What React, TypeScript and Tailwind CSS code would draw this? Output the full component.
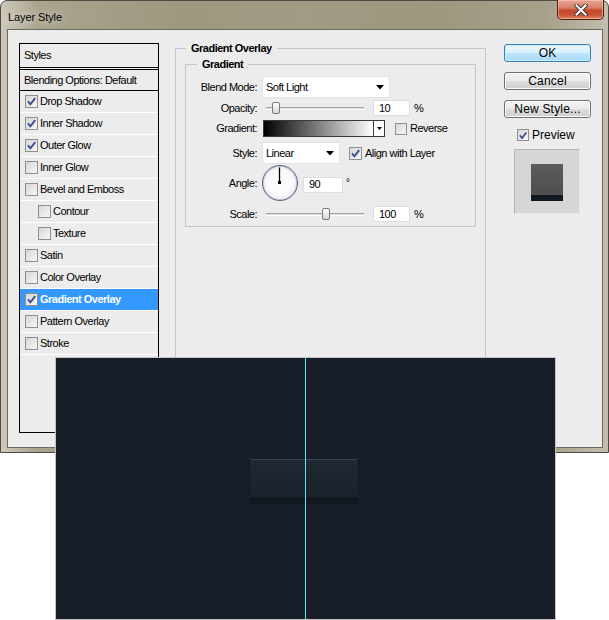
import React from "react";

function Check({ checked, size = 13 }: { checked?: boolean; size?: number }) {
  return (
    <span
      className="border border-[#8e8f8f] bg-[linear-gradient(135deg,#d6d6d6,#f7f7f7)] flex items-center justify-center shrink-0"
      style={{ width: size, height: size }}
    >
      {checked && (
        <svg width="11" height="11" viewBox="0 0 11 11">
          <path d="M2 5.3 L4.4 8.3 L9.2 2.2" fill="none" stroke="#3a4c8c" strokeWidth="1.9" />
        </svg>
      )}
    </span>
  );
}

const items: { label: string; checked?: boolean; indent?: boolean; selected?: boolean }[] = [
  { label: "Drop Shadow", checked: true },
  { label: "Inner Shadow", checked: true },
  { label: "Outer Glow", checked: true },
  { label: "Inner Glow" },
  { label: "Bevel and Emboss" },
  { label: "Contour", indent: true },
  { label: "Texture", indent: true },
  { label: "Satin" },
  { label: "Color Overlay" },
  { label: "Gradient Overlay", checked: true, selected: true },
  { label: "Pattern Overlay" },
  { label: "Stroke" },
];

function Arrow() {
  return (
    <svg width="8" height="5" viewBox="0 0 8 5">
      <path d="M0 0 H8 L4 4.5 Z" fill="#000" />
    </svg>
  );
}

function Slider({ pos }: { pos: number }) {
  return (
    <div className="w-[111px] h-full flex items-center pl-[4px]">
      <div className="relative w-[98px] h-[3px] border-t border-[#a7a7a7] border-b border-b-white bg-[#dcdcdc]">
        <div
          className="absolute top-[-6px] w-[8px] h-[12px] rounded-[2px] border border-[#7a7a7a] bg-[linear-gradient(#fdfdfd,#d9d9d9)]"
          style={{ left: pos }}
        />
      </div>
    </div>
  );
}

function NumBox({ value, w = 37 }: { value: string; w?: number }) {
  return (
    <div
      className="h-[16px] bg-white border border-[#dedede] flex items-center pl-[5px] text-[11px]"
      style={{ width: w }}
    >
      {value}
    </div>
  );
}

function Btn({ children, primary }: { children: React.ReactNode; primary?: boolean }) {
  return (
    <div
      className={
        "w-[87px] h-[18px] rounded-[3px] border flex items-center justify-center text-[12px] tracking-[0.2px] text-black " +
        (primary
          ? "border-[#3c7fb1] bg-[linear-gradient(#eaf6fd_0%,#d9f0fc_50%,#bee6fd_51%,#a7d9f5_100%)] shadow-[inset_0_0_0_1px_#c9eefe]"
          : "border-[#707070] bg-[linear-gradient(#f2f2f2_0%,#ebebeb_50%,#dddddd_51%,#cfcfcf_100%)] shadow-[inset_0_0_0_1px_#fcfcfc]")
      }
    >
      {children}
    </div>
  );
}

export default function App() {
  return (
    <div className="relative w-[609px] h-[620px] bg-white overflow-hidden font-['Liberation_Sans',Arial,sans-serif] text-black">
      {/* window */}
      <div className="w-[609px] h-[453px] rounded-t-[7px] border border-[#4e4b43] bg-[linear-gradient(90deg,#cfc9ba_0%,#aaa38e_6%,#9e987f_30%,#a29b84_50%,#9d977e_70%,#a7a08a_90%,#c3bdad_100%)] flex flex-col">
        <div className="h-[28px] flex items-start justify-between">
          <div className="ml-[7px] mt-[8px] text-[11px] tracking-[-0.1px] text-black [text-shadow:0_0_8px_rgba(255,255,255,0.9)]">
            Layer Style
          </div>
          <div className="mr-[4px] mt-[-1px] w-[47px] h-[20px] rounded-b-[5px] border border-[#4a1e15] border-t-0 bg-[linear-gradient(#e8a894_0%,#d9806a_40%,#c5482c_55%,#c95535_80%,#dd8a60_100%)] shadow-[inset_0_0_0_1px_rgba(255,210,190,0.5)] flex items-center justify-center">
            <svg width="14" height="12" viewBox="0 0 14 12">
              <path d="M2.5 1.5 L11.5 10.5 M11.5 1.5 L2.5 10.5" stroke="#3a2a28" strokeWidth="4" strokeLinecap="square" />
              <path d="M2.5 1.5 L11.5 10.5 M11.5 1.5 L2.5 10.5" stroke="#ffffff" strokeWidth="2.2" strokeLinecap="square" />
            </svg>
          </div>
        </div>

        {/* client */}
        <div className="ml-[6px] mr-[5px] h-[419px] border border-[#6f6a5e] bg-[#ececec] flex items-start pl-[11px] pt-[13px] text-[11px] tracking-[-0.5px]">
          {/* sidebar */}
          <div className="w-[140px] h-[390px] border border-black flex flex-col shrink-0">
            <div className="h-[23px] flex items-center pl-[4px]">Styles</div>
            <div className="h-[3px] border-y border-black" />
            <div className="h-[20px] flex items-center pl-[4px]">Blending Options: Default</div>
            <div className="h-px bg-black" />
            {items.map((it) => (
              <div
                key={it.label}
                className={
                  "h-[22px] border-b border-white flex items-center gap-[1px] " +
                  (it.indent ? "pl-[18px] " : "pl-[5px] ") +
                  (it.selected ? "bg-[#3399ff] text-white font-bold" : "")
                }
              >
                <Check checked={it.checked} />
                <span className="ml-[1px]">{it.label}</span>
              </div>
            ))}
          </div>

          {/* main group */}
          <fieldset className="ml-[16px] mt-[-1px] w-[311px] h-[380px] border border-[#c6c6c6] shrink-0">
            <legend className="ml-[10px] px-[5px] font-bold leading-[12px]">Gradient Overlay</legend>
            <fieldset className="ml-[9px] mr-[9px] mt-[4px] border border-[#c6c6c6] pb-[4px]">
              <legend className="ml-[11px] px-[5px] font-bold leading-[12px]">Gradient</legend>
              <div className="flex flex-col mt-[6px]">
                {/* Blend mode */}
                <div className="h-[22px] flex items-center">
                  <div className="w-[71px] text-right">Blend Mode:</div>
                  <div className="ml-[5px] w-[128px] h-[22px] bg-white border border-[#e2e2e2] flex items-center justify-between pl-[3px] pr-[5px]">
                    <span>Soft Light</span>
                    <Arrow />
                  </div>
                </div>
                {/* Opacity */}
                <div className="mt-[2px] h-[16px] flex items-center">
                  <div className="w-[71px] text-right">Opacity:</div>
                  <div className="ml-[5px] h-full flex items-center">
                    <Slider pos={6} />
                    <NumBox value="10" />
                    <span className="ml-[4px]">%</span>
                  </div>
                </div>
                {/* Gradient */}
                <div className="mt-[4px] h-[17px] flex items-center">
                  <div className="w-[71px] text-right">Gradient:</div>
                  <div className="ml-[6px] w-[122px] h-[17px] border border-[#3a3a3a] flex">
                    <div className="flex-1 bg-[linear-gradient(90deg,#000,#fff)] border-r border-[#3a3a3a]" />
                    <div className="w-[10px] bg-white flex items-center justify-center">
                      <svg width="5" height="3" viewBox="0 0 5 3">
                        <path d="M0 0 H5 L2.5 3 Z" fill="#000" />
                      </svg>
                    </div>
                  </div>
                  <div className="ml-[10px] flex items-center gap-[2px]">
                    <Check size={12} />
                    <span className="ml-[1px]">Reverse</span>
                  </div>
                </div>
                {/* Style */}
                <div className="mt-[5px] h-[22px] flex items-center">
                  <div className="w-[71px] text-right">Style:</div>
                  <div className="ml-[5px] w-[78px] h-[22px] bg-white border border-[#e2e2e2] flex items-center justify-between pl-[3px] pr-[5px]">
                    <span>Linear</span>
                    <Arrow />
                  </div>
                  <div className="ml-[9px] flex items-center gap-[3px]">
                    <Check checked />
                    <span>Align with Layer</span>
                  </div>
                </div>
                {/* Angle */}
                <div className="mt-[1px] h-[36px] flex items-center">
                  <div className="w-[71px] text-right">Angle:</div>
                  <div className="ml-[5px] w-[36px] h-[36px] rounded-full border-[1.5px] border-[#56617a] bg-[radial-gradient(circle,#fbfbfb_45%,#e3e5ea_100%)] shadow-[inset_0_0_0_1px_#c9cdd6] relative">
                    <svg className="absolute inset-0" width="33" height="33" viewBox="0 0 33 33">
                      <line x1="16.5" y1="16.5" x2="16.5" y2="1.5" stroke="#000" strokeWidth="1.3" />
                      <rect x="15" y="15" width="3" height="3" fill="#000" />
                    </svg>
                  </div>
                  <div className="ml-[5px] mt-[3px]">
                    <NumBox value="90" w={40} />
                  </div>
                  <span className="ml-[3px] self-start mt-[10px] text-[10px]">°</span>
                </div>
                {/* Scale */}
                <div className="mt-[5px] h-[16px] flex items-center">
                  <div className="w-[71px] text-right">Scale:</div>
                  <div className="ml-[5px] h-full flex items-center">
                    <Slider pos={56} />
                    <NumBox value="100" />
                    <span className="ml-[4px]">%</span>
                  </div>
                </div>
              </div>
            </fieldset>
          </fieldset>

          {/* buttons */}
          <div className="ml-[18px] mt-[1px] flex flex-col tracking-normal">
            <Btn primary>OK</Btn>
            <div className="mt-[10px]">
              <Btn>Cancel</Btn>
            </div>
            <div className="mt-[10px]">
              <Btn>New Style...</Btn>
            </div>
            <div className="mt-[8px] ml-[13px] flex items-center gap-[3px] text-[12px]">
              <Check checked size={12} />
              <span>Preview</span>
            </div>
            <div className="mt-[5px] ml-[10px] w-[66px] h-[65px] bg-[#d6d6d6] border border-[#b5b5b5] border-b-[#e8e8e8] border-r-[#e8e8e8] flex items-center justify-center">
              <div className="w-[32px] h-[37px] mt-[2px] flex flex-col">
                <div className="flex-1 bg-[linear-gradient(#5b5b5b,#4e4e4e)]" />
                <div className="h-[6px] bg-[#121821]" />
              </div>
            </div>
          </div>
        </div>
      </div>

      {/* dark canvas overlay */}
      <div className="absolute left-[55px] top-[357px] w-[501px] h-[263px] border border-[#c4c4c4] bg-[#171e29]">
        <div className="absolute left-[194px] top-[101px] w-[108px] h-[44px] rounded-[2px] bg-[#111820] shadow-[0_1px_2px_rgba(0,0,0,0.4)]">
          <div className="h-[38px] rounded-t-[2px] border-t border-[#3c4753] bg-[linear-gradient(#1f2933,#1a222b)]" />
        </div>
        <div className="absolute left-[249px] top-0 bottom-0 w-px bg-[#5ee3ee]" />
      </div>
    </div>
  );
}
